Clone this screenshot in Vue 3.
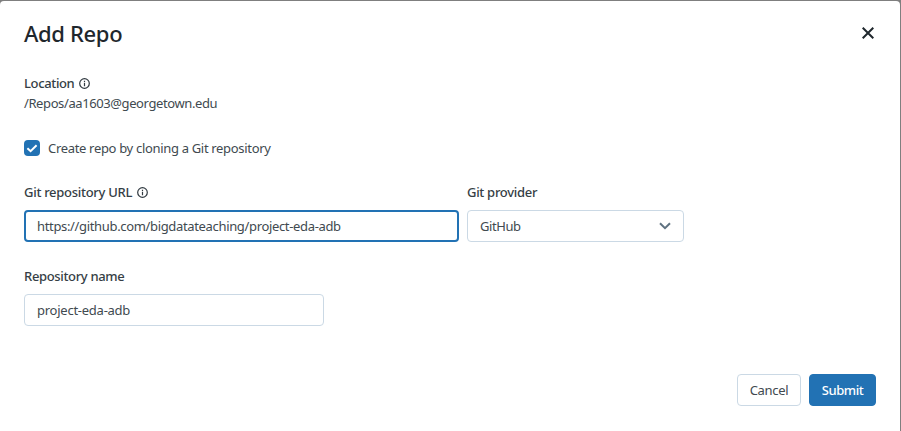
<script setup>
import { ref } from 'vue'

const cloneRepo = ref(true)
const url = ref('https://github.com/bigdatateaching/project-eda-adb')
const name = ref('project-eda-adb')
</script>

<template>
  <div class="backdrop">
    <section class="dialog" role="dialog" aria-labelledby="title">
      <header class="header">
        <h1 id="title"><span class="t-title">Add Repo</span></h1>
        <button class="close" aria-label="Close">
          <svg width="12" height="12" viewBox="0 0 12 12"><path d="M0.7 0.7 11.3 11.3M11.3 0.7 0.7 11.3" /></svg>
        </button>
      </header>

      <div class="location">
        <div class="label">
          <span class="t-location">Location</span>
          <svg class="info" width="11" height="11" viewBox="0 0 11 11"><circle cx="5.5" cy="5.5" r="4.8" /><path d="M5.5 4.8V8.2M5.5 2.7V3.9" /></svg>
        </div>
        <div class="path"><span class="t-path">/Repos/aa1603@georgetown.edu</span></div>
      </div>

      <div class="check" role="checkbox" :aria-checked="cloneRepo" @click="cloneRepo = !cloneRepo">
        <span class="box" :class="{ on: cloneRepo }">
          <svg v-if="cloneRepo" width="16" height="16" viewBox="0 0 16 16"><path d="M3.4 8.2 6.6 11.2 12.6 5.2" /></svg>
        </span>
        <span class="t-check">Create repo by cloning a Git repository</span>
      </div>

      <div class="row">
        <div class="field url">
          <div class="label">
            <span class="t-url-label">Git repository URL</span>
            <svg class="info" width="11" height="11" viewBox="0 0 11 11"><circle cx="5.5" cy="5.5" r="4.8" /><path d="M5.5 4.8V8.2M5.5 2.7V3.9" /></svg>
          </div>
          <div class="control focused"><span class="t-url">{{ url }}</span></div>
        </div>
        <div class="field provider">
          <div class="label"><span class="t-provider">Git provider</span></div>
          <div class="control select">
            <span class="t-github">GitHub</span>
            <svg width="12" height="8" viewBox="0 0 12 8"><path d="M1 1.2 6 6.2 11 1.2" /></svg>
          </div>
        </div>
      </div>

      <div class="field name">
        <div class="label"><span class="t-name-label">Repository name</span></div>
        <div class="control"><span class="t-name">{{ name }}</span></div>
      </div>

      <footer class="footer">
        <button class="btn cancel"><span class="t-cancel">Cancel</span></button>
        <button class="btn submit"><span class="t-submit">Submit</span></button>
      </footer>
    </section>
  </div>
</template>

<style>
body {
  overflow: hidden;
  background: #7f7f7f;
}
</style>

<style scoped>
* {
  box-sizing: border-box;
}
.backdrop {
  height: 431px;
  padding: 1px 1px 0 0;
  background: #7f7f7f;
}
.dialog {
  height: 430px;
  padding: 16px 24px 0;
  border-radius: 4px 4px 0 0;
  background: #fff;
  color: #414a50;
  font-family: "Noto Sans", "Open Sans", sans-serif;
  font-size: 13px;
  line-height: 20px;
  white-space: nowrap;
}
.header {
  display: flex;
  justify-content: space-between;
  align-items: center;
  height: 32px;
}
h1 {
  margin: 0;
  color: #1f272d;
  font-size: 22px;
  line-height: 32px;
  font-weight: 500;
}
.close {
  display: flex;
  padding: 0;
  margin-right: 2px;
  border: 0;
  background: none;
}
svg {
  display: block;
  flex: none;
  fill: none;
}
.close svg {
  stroke: #1f272d;
  stroke-width: 2;
}
.location {
  margin-top: 24px;
}
.label {
  display: flex;
  align-items: center;
  gap: 5px;
  height: 20px;
  color: #353e45;
  font-weight: 500;
}
.info {
  stroke: #303940;
  stroke-width: 1.2;
}
.check {
  display: flex;
  align-items: center;
  gap: 8px;
  height: 20px;
  margin-top: 25px;
}
.box {
  width: 16px;
  height: 16px;
  border: 1px solid #c8d6e3;
  border-radius: 4px;
}
.box.on {
  border: 0;
  background: #2272b4;
}
.box svg {
  stroke: #fff;
  stroke-width: 2;
}
.row {
  display: flex;
  gap: 8px;
  margin-top: 24px;
}
.url {
  width: 435px;
}
.provider {
  width: 217px;
}
.name {
  width: 300px;
  margin-top: 24px;
}
.control {
  display: flex;
  align-items: center;
  height: 32px;
  margin-top: 8px;
  padding: 0 12px;
  border: 1px solid #cbd9e5;
  border-radius: 4px;
}
.focused {
  padding: 0 11px;
  border: 2px solid #2272b4;
}
.select {
  justify-content: space-between;
}
.select svg {
  stroke: #5f7281;
  stroke-width: 2;
}
.footer {
  display: flex;
  justify-content: flex-end;
  gap: 8px;
  margin-top: 48px;
}
.btn {
  display: flex;
  align-items: center;
  justify-content: center;
  height: 32px;
  padding: 0;
  border: 1px solid #cbd9e5;
  border-radius: 4px;
  background: #fff;
  color: #414a50;
  font: inherit;
}
.cancel {
  width: 64px;
}
.submit {
  width: 67px;
  border-color: #2272b4;
  background: #2272b4;
  color: #fff;
  font-weight: 500;
}
.t-title { letter-spacing: -0.35px; }
.t-location { letter-spacing: -0.36px; }
.t-path { letter-spacing: -0.4px; }
.t-check { letter-spacing: -0.32px; }
.t-url-label { letter-spacing: -0.29px; }
.t-url { letter-spacing: -0.34px; }
.t-provider { letter-spacing: -0.3px; }
.t-github { letter-spacing: -0.42px; }
.t-name-label { letter-spacing: -0.34px; }
.t-name { letter-spacing: -0.25px; }
.t-cancel { letter-spacing: -0.3px; }
.t-submit { letter-spacing: -0.45px; }
</style>
